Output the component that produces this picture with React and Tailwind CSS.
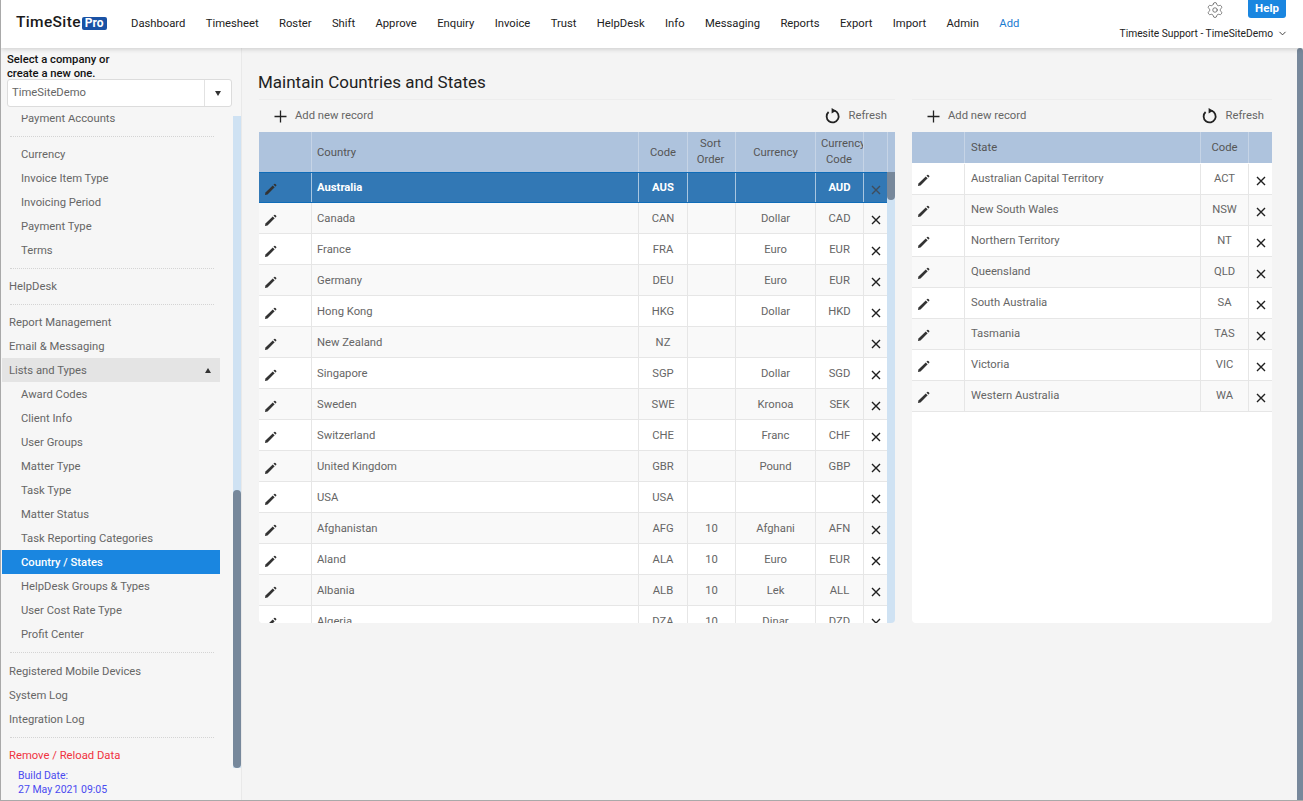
import { Settings, ChevronDown } from "lucide-react";

const navItems = ["Dashboard", "Timesheet", "Roster", "Shift", "Approve", "Enquiry", "Invoice", "Trust", "HelpDesk", "Info", "Messaging", "Reports", "Export", "Import", "Admin"];

const countries = [
  ["Canada", "CAN", "", "Dollar", "CAD"],
  ["France", "FRA", "", "Euro", "EUR"],
  ["Germany", "DEU", "", "Euro", "EUR"],
  ["Hong Kong", "HKG", "", "Dollar", "HKD"],
  ["New Zealand", "NZ", "", "", ""],
  ["Singapore", "SGP", "", "Dollar", "SGD"],
  ["Sweden", "SWE", "", "Kronoa", "SEK"],
  ["Switzerland", "CHE", "", "Franc", "CHF"],
  ["United Kingdom", "GBR", "", "Pound", "GBP"],
  ["USA", "USA", "", "", ""],
  ["Afghanistan", "AFG", "10", "Afghani", "AFN"],
  ["Aland", "ALA", "10", "Euro", "EUR"],
  ["Albania", "ALB", "10", "Lek", "ALL"],
  ["Algeria", "DZA", "10", "Dinar", "DZD"],
];

const states = [
  ["Australian Capital Territory", "ACT"],
  ["New South Wales", "NSW"],
  ["Northern Territory", "NT"],
  ["Queensland", "QLD"],
  ["South Australia", "SA"],
  ["Tasmania", "TAS"],
  ["Victoria", "VIC"],
  ["Western Australia", "WA"],
];

const countryCols = "grid grid-cols-[52px_327px_49px_48px_80px_48px_24px]";
const stateCols = "grid grid-cols-[52px_236px_48px_24px]";

function Pencil({ className = "text-[#333]" }) {
  return (
    <svg viewBox="0 0 14 14" className={`h-[13px] w-[13px] fill-current ${className}`}>
      <path d="M1 13l.6-2.8L9.4 2.6l2.1 2.1-7.7 7.7z" />
      <path d="M10.2 1.8l.8-.8a1 1 0 0 1 1.3 0l.8.8a1 1 0 0 1 0 1.3l-.8.8z" />
    </svg>
  );
}

function Cross({ className = "text-[#1f1f1f]" }) {
  return (
    <svg viewBox="0 0 10 10" className={`h-[10px] w-[10px] stroke-current ${className}`} fill="none" strokeWidth="1.4">
      <path d="M1 1l8 8M9 1l-8 8" />
    </svg>
  );
}

function Toolbar() {
  return (
    <div className="flex h-[33px] shrink-0 items-center justify-between border-t border-[#ededed] pl-[15px] pr-[8px] text-[#666]">
      <div className="flex items-center gap-[8px]">
        <svg viewBox="0 0 13 13" className="h-[13px] w-[13px] stroke-[#222]" fill="none" strokeWidth="1.3">
          <path d="M6.5 0.5v12M0.5 6.5h12" />
        </svg>
        <span className="pt-[1px]">Add new record</span>
      </div>
      <div className="flex items-center gap-[8px]">
        <svg viewBox="0 0 16 16" className="h-[16px] w-[16px]" fill="none">
          <path d="M9.4 2.7A6 6 0 1 1 3.6 4" stroke="#222" strokeWidth="1.8" />
          <path d="M6.6 0l4.6 2.7-4.6 2.7z" fill="#222" />
        </svg>
        <span className="pt-[1px]">Refresh</span>
      </div>
    </div>
  );
}

function Cell({ children, first, center = true, className = "" }) {
  return (
    <div className={`flex items-center overflow-hidden whitespace-nowrap ${center ? "justify-center" : "pl-[5px]"} ${first ? "" : "border-l border-[#e6e6e6]"} ${className}`}>
      {children}
    </div>
  );
}

function EditCell({ className, top = "pt-[4px]" }) {
  return (
    <Cell first center={false} className={`!pl-[5px] ${top}`}>
      <Pencil className={className} />
    </Cell>
  );
}

function CountryRow({ row, index }) {
  return (
    <div className={`${countryCols} h-[31px] border-b border-[#e6e6e6] ${index % 2 === 0 ? "bg-[#f9f9f9]" : "bg-white"}`}>
      <EditCell />
      <Cell center={false} className="pt-[2px]">{row[0]}</Cell>
      <Cell className="pt-[2px]">{row[1]}</Cell>
      <Cell className="pt-[2px]">{row[2]}</Cell>
      <Cell className="pt-[2px]">{row[3]}</Cell>
      <Cell className="pt-[2px]">{row[4]}</Cell>
      <Cell className="pt-[4px]"><Cross /></Cell>
    </div>
  );
}

function CountriesPanel() {
  return (
    <div className="flex h-[524px] w-[636px] shrink-0 flex-col overflow-hidden rounded-b-[4px] text-[#666]">
      <Toolbar />
      <div className="grid h-[40px] shrink-0 grid-cols-[52px_327px_49px_48px_80px_48px_24px_8px] bg-[#aec3dd] text-[#555] [&>div]:border-[#c6d4e6]">
        <Cell first />
        <Cell center={false} className="pt-[2px]">Country</Cell>
        <Cell className="pt-[2px]">Code</Cell>
        <Cell className="pr-[2px] text-center leading-[16px]">Sort<br />Order</Cell>
        <Cell className="pt-[2px]">Currency</Cell>
        <Cell center={false} className="leading-[16px]">
          <div>Currency<div className="pl-[5px]">Code</div></div>
        </Cell>
        <Cell />
        <Cell />
      </div>
      <div className="flex min-h-0 flex-1">
        <div className="w-[628px] shrink-0 overflow-hidden bg-white">
          <div className={`${countryCols} h-[31px] border-y border-[#0f6cb8] bg-[#3278b5] font-bold text-white [&>div]:border-[#a9c6e0]`}>
            <EditCell className="text-[#333]" />
            <Cell center={false} className="pt-[1px]">Australia</Cell>
            <Cell className="pt-[1px]">AUS</Cell>
            <Cell />
            <Cell />
            <Cell className="pt-[1px]">AUD</Cell>
            <Cell className="pt-[4px]"><Cross className="text-[#3f4d5c]" /></Cell>
          </div>
          {countries.map((row, i) => (
            <CountryRow key={row[0]} row={row} index={i} />
          ))}
        </div>
        <div className="w-[8px] bg-[#cfe2f3]">
          <div className="h-[28px] rounded-b-[4px] bg-[#77889b]" />
        </div>
      </div>
    </div>
  );
}

function StatesPanel() {
  return (
    <div className="flex h-[524px] w-[360px] shrink-0 flex-col overflow-hidden rounded-b-[4px] text-[#666]">
      <Toolbar />
      <div className={`${stateCols} h-[31px] shrink-0 bg-[#aec3dd] text-[#555] [&>div]:border-[#c6d4e6]`}>
        <Cell first />
        <Cell center={false} className="!pl-[6px] pt-[1px]">State</Cell>
        <Cell className="pt-[1px]">Code</Cell>
        <Cell />
      </div>
      <div className="flex-1 bg-white pt-[1px]">
        {states.map((row, i) => (
          <div key={row[0]} className={`${stateCols} h-[31px] border-b border-[#e6e6e6] ${i % 2 === 1 ? "bg-[#f9f9f9]" : "bg-white"}`}>
            <EditCell top="pt-[3px]" />
            <Cell center={false} className="!pl-[6px]">{row[0]}</Cell>
            <Cell>{row[1]}</Cell>
            <Cell className="pt-[4px]"><Cross /></Cell>
          </div>
        ))}
      </div>
    </div>
  );
}

function SideItem({ children, sub }) {
  return <div className={`flex h-[24px] items-center pt-[2px] ${sub ? "pl-[19px]" : "pl-[7px]"}`}>{children}</div>;
}

function SideRule() {
  return <div className="my-[5.5px] ml-[8px] mr-[6px] border-t border-dotted border-[#d4d4d4]" />;
}

function Sidebar() {
  return (
    <aside className="flex w-[241px] shrink-0 flex-col overflow-hidden border-r border-[#e9e9e9] bg-[#f6f6f6] text-[#666]">
      <div className="h-[31px] shrink-0 pl-[6px] pt-[5px] font-medium leading-[13.5px] text-[#111]">
        Select a company or<br />create a new one.
      </div>
      <div className="ml-[6px] flex h-[28px] w-[225px] shrink-0 items-center rounded-[3px] border border-[#dcdcdc] bg-white">
        <span className="flex-1 pl-[4px] pt-[1px]">TimeSiteDemo</span>
        <span className="flex h-full w-[27px] items-center justify-center border-l border-[#e2e2e2]">
          <span className="h-0 w-0 border-x-[3.5px] border-t-[5px] border-x-transparent border-t-[#333]" />
        </span>
      </div>
      <div className="mt-[8px] flex min-h-0 flex-1">
        <div className="min-w-0 flex-1 overflow-hidden pl-[1px]">
          <div className="-mt-[9px] w-[218px]">
            <SideItem sub>Payment Accounts</SideItem>
            <SideRule />
            {["Currency", "Invoice Item Type", "Invoicing Period", "Payment Type", "Terms"].map((t) => (
              <SideItem sub key={t}>{t}</SideItem>
            ))}
            <SideRule />
            <SideItem>HelpDesk</SideItem>
            <SideRule />
            <SideItem>Report Management</SideItem>
            <SideItem>Email &amp; Messaging</SideItem>
            <div className="flex h-[24px] items-center justify-between bg-[#e4e4e4] pl-[7px] pr-[9px] pt-[2px]">
              <span>Lists and Types</span>
              <span className="mb-[2px] h-0 w-0 border-x-[3.5px] border-b-[5px] border-x-transparent border-b-[#333]" />
            </div>
            {["Award Codes", "Client Info", "User Groups", "Matter Type", "Task Type", "Matter Status", "Task Reporting Categories"].map((t) => (
              <SideItem sub key={t}>{t}</SideItem>
            ))}
            <div className="flex h-[24px] items-center bg-[#1a86e0] pl-[19px] pt-[2px] font-medium text-white">Country / States</div>
            {["HelpDesk Groups & Types", "User Cost Rate Type", "Profit Center"].map((t) => (
              <SideItem sub key={t}>{t}</SideItem>
            ))}
            <SideRule />
            <div className="pt-[1px]">
              <SideItem>Registered Mobile Devices</SideItem>
              <SideItem>System Log</SideItem>
              <SideItem>Integration Log</SideItem>
            </div>
            <SideRule />
            <SideItem><span className="text-[#f0333f]">Remove / Reload Data</span></SideItem>
            <div className="pl-[16px] pt-[2px] text-[10.5px] leading-[14px] text-[#4a4af0]">
              Build Date:<br />27 May 2021 09:05
            </div>
          </div>
        </div>
        <div className="mb-[32px] mt-[1px] w-[8px] shrink-0 bg-[#cfe2f3]">
          <div className="mt-[374px] h-[278px] rounded-[4px] bg-[#77889b]" />
        </div>
      </div>
    </aside>
  );
}

export default function App() {
  return (
    <div className="flex h-[801px] w-[1303px] flex-col overflow-hidden border-b border-l border-[#a9a9a9] bg-[#f4f4f4] font-['Roboto',sans-serif] text-[11.25px]">
      <header className="relative z-10 flex h-[48px] shrink-0 bg-white shadow-[0_1px_5px_rgba(0,0,0,0.18)]">
        <div className="flex h-[46px] w-[130px] shrink-0 items-center pl-[15px]">
          <span className="text-[15.5px] font-medium tracking-[0.35px] text-[#1a1a1a]">TimeSite</span>
          <span className="ml-[1px] rounded-[2px] bg-[#1a52a5] px-[3px] py-[0.5px] text-[12px] font-bold leading-[12px] text-white">Pro</span>
        </div>
        <nav className="flex h-[46px] flex-1 items-center gap-[20.33px] pt-[2px] text-[#222]">
          {navItems.map((item) => (
            <span key={item}>{item}</span>
          ))}
          <span className="text-[#1a7bd0]">Add</span>
        </nav>
        <div className="flex w-[185px] shrink-0 flex-col items-end pr-[16px]">
          <div className="mr-[1px] flex items-start">
            <Settings size={18} strokeWidth={1} className="mr-[24px] mt-[1px] text-[#555]" />
            <span className="flex h-[18px] w-[38px] items-center justify-center rounded-b-[3px] bg-[#1a86e0] text-[11.5px] font-bold text-white">Help</span>
          </div>
          <div className="mt-[7px] flex items-center whitespace-nowrap text-[10.25px] text-[#222]">
            Timesite Support - TimeSiteDemo
            <ChevronDown size={11} className="ml-[4px] mr-[-1px] text-[#333]" />
          </div>
        </div>
      </header>
      <div className="flex min-h-0 flex-1">
        <Sidebar />
        <main className="min-w-0 flex-1 pl-[16px] pt-[23px]">
          <h1 className="h-[28px] text-[17px] leading-[22px] text-[#222]">Maintain Countries and States</h1>
          <div className="flex gap-[17px] pl-[1px]">
            <CountriesPanel />
            <StatesPanel />
          </div>
        </main>
        <div className="w-[6px] shrink-0 rounded-t-[3px] bg-[#77889b]" />
      </div>
    </div>
  );
}
